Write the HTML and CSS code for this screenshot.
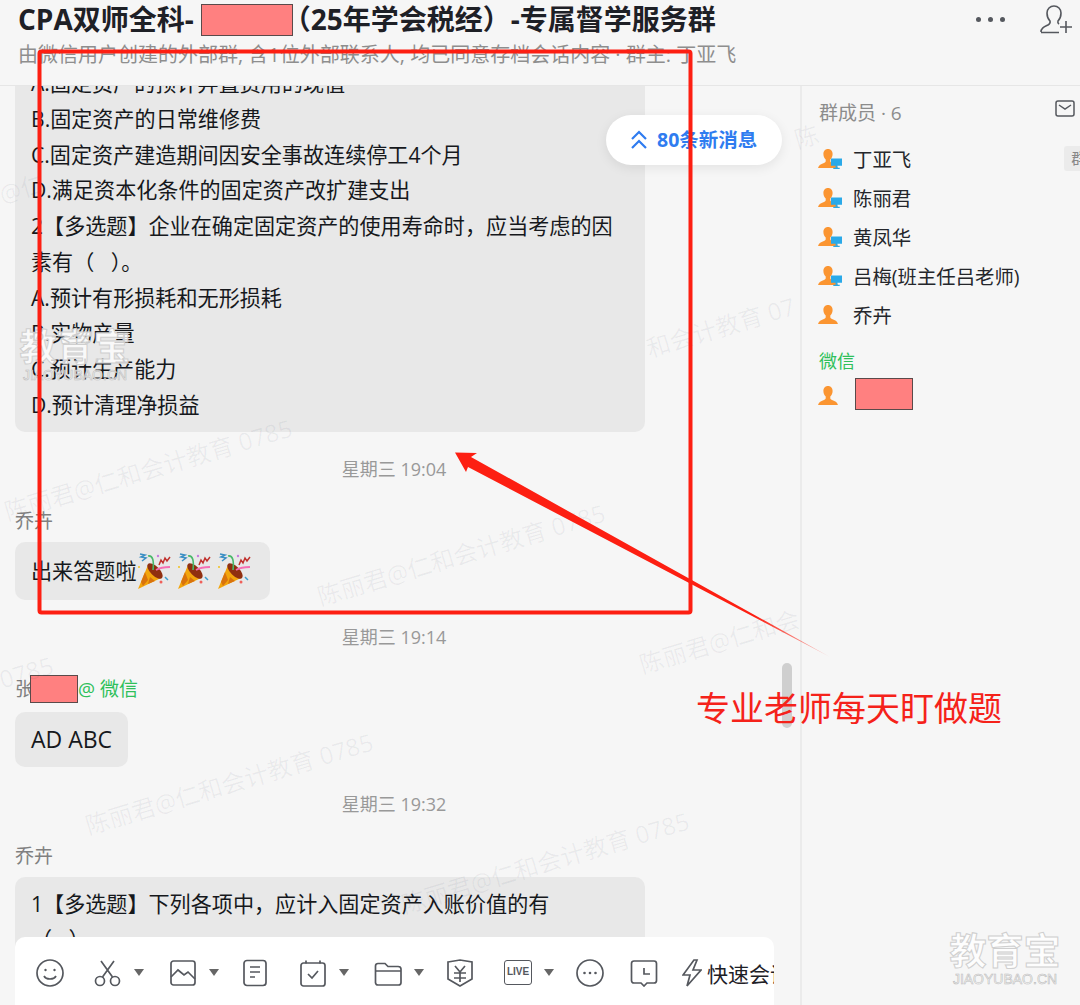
FILE: index.html
```html
<!DOCTYPE html>
<html lang="zh-CN">
<head>
    <meta charset="UTF-8">
    <title>CPA双师全科 专属督学服务群</title>
    <link rel="stylesheet" href="styles.css">
</head>
<body>
    <svg class="sprite" width="0" height="0">
        <symbol id="person" viewBox="0 0 22 22">
            <path fill="#fb9531" d="M11 1c3 0 4.600 2.300 4.600 5 0 2.400-1 4.300-2.300 5.400v1.800c0 .9.700 1.400 2.300 2 2.400.8 4.400 1.600 5.400 4.800H1c1-3.200 3-4 5.400-4.800 1.600-.6 2.300-1.100 2.300-2v-1.800C7.400 10.300 6.400 8.400 6.400 6c0-2.700 1.600-5 4.600-5z"/>
        </symbol>
        <symbol id="monitor" viewBox="0 0 12 12">
            <path fill="#2aa9e8" d="M0 0h12v8H0zM5 8h2v2h2.500v1.500h-7V10H5z"/>
        </symbol>
        <symbol id="popper" viewBox="0 0 36 36">
            <path fill="#f2a50c" d="M1 36l10-24 13 13z"/>
            <path fill="#d9730d" d="M4 29l4-10 3 8-5 6zM13 24l5 4-7 3z"/>
            <ellipse cx="18" cy="18" rx="4.500" ry="10" fill="#8f2f10" transform="rotate(-45 18 18)"/>
            <path fill="none" stroke="#49b86a" stroke-width="1.600" d="M11 3c5-1 6 5 5 14"/>
            <path fill="none" stroke="#3b8fc4" stroke-width="1.500" d="M3 1l5 1-4 2 5 1-4 3"/>
            <path fill="none" stroke="#c0312d" stroke-width="1.500" d="M22 12l2-5 2 3 2-5 2 3 3-4"/>
            <path fill="none" stroke="#f56fb3" stroke-width="1.800" d="M19 17c5-3 9-3 14-3"/>
            <circle cx="2" cy="14" r="1" fill="#f0c020"/>
            <circle cx="21" cy="3" r="1.200" fill="#c77ae0"/>
            <circle cx="24" cy="29" r="1.500" fill="#f0605a"/>
            <path fill="none" stroke="#3b9ed0" stroke-width="1.500" d="M28 24l3 3"/>
        </symbol>
    </svg>

    <header class="top-bar">
        <div class="top-info">
            <h1 class="group-title">CPA双师全科-<span class="redact redact-title"></span>（25年学会税经）-专属督学服务群</h1>
            <p class="group-desc">由微信用户创建的外部群, 含1位外部联系人, 均已同意存档会话内容 · 群主: 丁亚飞</p>
        </div>
        <div class="top-actions">
            <div class="dots"><i></i><i></i><i></i></div>
            <svg class="add-user" width="34" height="30" viewBox="0 0 34 30" fill="none" stroke="#55585e" stroke-width="1.600">
                <path d="M2 28c0-4 3-5 7-7 2-1 2.500-2 2-4-2-2-3-5-3-8 0-4 3-7 7-7s7 3 7 7c0 3-1 6-3 8-.5 1.500 0 2.500 1 3.200M2 28.500h18"/>
                <path d="M27 17v12M21 23h12"/>
            </svg>
        </div>
    </header>

    <main class="content">
        <section class="chat">
            <div class="chat-log">
                <div class="bubble bubble-wide">
                    A.固定资产的预计弃置费用的现值<br>
                    B.固定资产的日常维修费<br>
                    C.固定资产建造期间因安全事故连续停工4个月<br>
                    D.满足资本化条件的固定资产改扩建支出<br>
                    2【多选题】企业在确定固定资产的使用寿命时，应当考虑的因素有（&nbsp;&nbsp;&nbsp;）。<br>
                    A.预计有形损耗和无形损耗<br>
                    B.实物产量<br>
                    C.预计生产能力<br>
                    D.预计清理净损益
                </div>
                <div class="time">星期三 19:04</div>
                <div class="sender">乔卉</div>
                <div class="bubble bubble-emoji">出来答题啦<svg class="popper"><use href="#popper"/></svg><svg class="popper"><use href="#popper"/></svg><svg class="popper"><use href="#popper"/></svg></div>
                <div class="time">星期三 19:14</div>
                <div class="sender">张<span class="redact redact-name"></span><span class="wechat-tag">@ 微信</span></div>
                <div class="bubble bubble-latin">AD ABC</div>
                <div class="time">星期三 19:32</div>
                <div class="sender">乔卉</div>
                <div class="bubble bubble-wide">
                    1【多选题】下列各项中，应计入固定资产入账价值的有<br>
                    （&nbsp;&nbsp;&nbsp;）
                </div>
            </div>

            <div class="new-msg">
                <svg width="18" height="20" viewBox="0 0 18 20" fill="none" stroke="#2f7cf0" stroke-width="2.200">
                    <path d="M2 9l7-7 7 7M2 18l7-7 7 7"/>
                </svg>
                <span>80条新消息</span>
            </div>
            <div class="scroll-thumb"></div>

            <div class="toolbar">
                <div class="tool">
                    <svg class="icon" viewBox="0 0 28 28"><circle cx="14" cy="14" r="13"/><circle cx="9.500" cy="11" r="1.200" class="solid"/><circle cx="18.500" cy="11" r="1.200" class="solid"/><path d="M8 17c2 4 10 4 12 0"/></svg>
                </div>
                <div class="tool has-caret">
                    <svg class="icon" viewBox="0 0 28 28"><circle cx="6" cy="22" r="4.500"/><circle cx="21" cy="22" r="4.500"/><path d="M8.500 18L20 2M18.500 18L7 2"/></svg>
                    <i class="caret"></i>
                </div>
                <div class="tool has-caret">
                    <svg class="icon" viewBox="0 0 28 28"><rect x="2" y="2" width="24" height="24" rx="2.500"/><path d="M2 18l7-7 6 5 4-3 7 7"/></svg>
                    <i class="caret"></i>
                </div>
                <div class="tool">
                    <svg class="icon" viewBox="0 0 28 28"><rect x="3" y="1.500" width="22" height="25" rx="3"/><path d="M9 8h10M9 13h10M9 18h5"/></svg>
                </div>
                <div class="tool has-caret">
                    <svg class="icon" viewBox="0 0 28 28"><rect x="2" y="4" width="24" height="23" rx="2.500"/><path d="M7 1.500v3M21 1.500v3M9 15l4 4 6-7"/></svg>
                    <i class="caret"></i>
                </div>
                <div class="tool has-caret">
                    <svg class="icon" viewBox="0 0 28 28"><path d="M1.500 24V7c0-1.500 1-2.500 2.500-2.500h7l3 3h10c1.500 0 3 1 3 2.500v13.500c0 1.500-1 2.500-2.500 2.500H4c-1.500 0-2.500-1-2.500-2.500zM1.500 12h25"/></svg>
                    <i class="caret"></i>
                </div>
                <div class="tool">
                    <svg class="icon" viewBox="0 0 28 28"><path d="M2 3l12-2 12 2v17l-12 7-12-7zM9 7l5 6 5-6M8 14h12M8 19h12M14 13v10"/></svg>
                </div>
                <div class="tool has-caret">
                    <div class="live-box">LIVE</div>
                    <i class="caret"></i>
                </div>
                <div class="tool">
                    <svg class="icon" viewBox="0 0 28 28"><circle cx="14" cy="14" r="13"/><circle cx="8.500" cy="14" r="1.300" class="solid"/><circle cx="14" cy="14" r="1.300" class="solid"/><circle cx="19.500" cy="14" r="1.300" class="solid"/></svg>
                </div>
                <div class="tool tool-clock">
                    <svg class="icon" viewBox="0 0 28 28"><path d="M4 2h20c1.500 0 2.500 1 2.500 2.500v17c0 1.500-1 2.500-2.500 2.500h-7l-3 3-3-3H4c-1.500 0-2.500-1-2.500-2.500v-17C1.500 3 2.500 2 4 2zM14 9v6h6"/></svg>
                </div>
                <div class="tool tool-meeting">
                    <svg class="icon bolt" viewBox="0 0 20 28"><path d="M12 1L1 16h7l-3 11 14-16h-8l4-10z"/></svg>
                    <span>快速会议</span>
                </div>
            </div>
        </section>

        <aside class="members">
            <div class="members-head">
                <span>群成员 · 6</span>
                <svg width="20" height="17" viewBox="0 0 20 17" fill="none" stroke="#55585e" stroke-width="1.500"><rect x="1" y="1" width="18" height="15" rx="2"/><path d="M4 5l6 4 6-4"/></svg>
            </div>
            <ul class="member-list">
                <li class="member"><span class="avatar"><svg class="av-person"><use href="#person"/></svg><svg class="av-monitor"><use href="#monitor"/></svg></span>丁亚飞<em class="role-tag">群主</em></li>
                <li class="member"><span class="avatar"><svg class="av-person"><use href="#person"/></svg><svg class="av-monitor"><use href="#monitor"/></svg></span>陈丽君</li>
                <li class="member"><span class="avatar"><svg class="av-person"><use href="#person"/></svg><svg class="av-monitor"><use href="#monitor"/></svg></span>黄凤华</li>
                <li class="member"><span class="avatar"><svg class="av-person"><use href="#person"/></svg><svg class="av-monitor"><use href="#monitor"/></svg></span>吕梅(班主任吕老师)</li>
                <li class="member"><span class="avatar"><svg class="av-person"><use href="#person"/></svg></span>乔卉</li>
            </ul>
            <div class="wechat-label">微信</div>
            <div class="member member-wx"><span class="avatar"><svg class="av-person"><use href="#person"/></svg></span><span class="redact redact-member"></span></div>
        </aside>
    </main>

    <!-- watermarks and the red markup sit over the page -->
    <div class="watermarks">
        <span class="wm wm1">陈丽君@仁和会计教育 0785</span>
        <span class="wm wm2">陈丽君@仁和会计教育 0785</span>
        <span class="wm wm3">陈丽君@仁和会计</span>
        <span class="wm wm4">陈丽君@仁和会计教育 0785</span>
        <span class="wm wm5">陈丽君@仁和会计教育 0785</span>
        <span class="wm wm6">和会计教育 07</span>
        <span class="wm wm7">0785</span>
        <span class="wm wm8">陈</span>
        <span class="wm wm9">@仁</span>
    </div>

    <div class="site-logo logo-left">
        <div class="logo-cn">教育宝</div>
        <div class="logo-en">JIAOYUBAO.CN</div>
    </div>
    <div class="site-logo logo-right">
        <div class="logo-cn">教育宝</div>
        <div class="logo-en">JIAOYUBAO.CN</div>
    </div>

    <svg class="markup" width="1080" height="1005" viewBox="0 0 1080 1005">
        <defs>
            <linearGradient id="arrowFade" gradientUnits="userSpaceOnUse" x1="456" y1="452" x2="830" y2="657">
                <stop offset="0.8" stop-color="#fd1f12"/>
                <stop offset="1" stop-color="#fd1f12" stop-opacity="0.2"/>
            </linearGradient>
        </defs>
        <rect x="39.500" y="51.500" width="651" height="561" rx="2" fill="none" stroke="#fd1f12" stroke-width="4"/>
        <path fill="url(#arrowFade)" d="M455 452.500L477 453l-6 4L830 657 468 467l-2 5z"/>
    </svg>
    <div class="markup-note">专业老师每天盯做题</div>
</body>
</html>
```

FILE: styles.css
```css
html, body {
    margin: 0;
    padding: 0;
    height: 1005px;
    overflow: hidden;
}
body {
    position: relative;
    background-color: #f6f6f6;
    color: #1e2026;
    font-family: "Open Sans", "Noto Sans CJK SC", sans-serif;
}
.sprite {
    display: block;
    height: 0;
}

/* top bar */
.top-bar {
    display: flex;
    justify-content: space-between;
    height: 85px;
    padding: 0 7px 0 18px;
    border-bottom: 1px solid #e6e6e6;
    position: relative;
    z-index: 2;
    background-color: #f6f6f6;
}
.group-title {
    margin: 0;
    height: 38px;
    font-size: 28px;
    line-height: 38px;
    font-weight: 700;
    white-space: nowrap;
}
.group-desc {
    margin: 0;
    padding-top: 4px;
    font-size: 20px;
    line-height: 26px;
    color: #8e8e8e;
    white-space: nowrap;
}
.top-actions {
    display: flex;
    align-items: flex-start;
    gap: 34px;
    padding-top: 4px;
}
.dots {
    display: flex;
    gap: 7px;
    padding-top: 13px;
}
.dots i {
    display: block;
    width: 5px;
    height: 5px;
    border-radius: 50%;
    background-color: #55585e;
}
.redact {
    display: inline-block;
    box-sizing: border-box;
    background-color: #ff8080;
    border: 1px solid #5a4a4a;
    vertical-align: top;
}
.redact-title {
    width: 92px;
    height: 32px;
    margin: 4px -10px 0 7px;
}
.redact-name {
    width: 48px;
    height: 28px;
    margin-left: -4px;
}
.redact-member {
    width: 58px;
    height: 32px;
    margin-left: 2px;
}

/* chat column */
.content {
    display: flex;
    height: 919px;
}
.chat {
    position: relative;
    width: 800px;
    overflow: hidden;
}
.chat-log {
    width: 758px;
    margin-top: -30px;
    padding-left: 15px;
}
.bubble {
    display: inline-block;
    box-sizing: border-box;
    padding: 9px 16px;
    border-radius: 10px;
    background-color: #e8e8e8;
    font-size: 21.100px;
    line-height: 35.750px;
    color: #16181c;
}
.bubble-wide {
    display: block;
    width: 630px;
}
.bubble-emoji {
    display: block;
    width: 255px;
    height: 58px;
    padding-top: 11px;
    padding-right: 0;
    white-space: nowrap;
}
.bubble-latin {
    font-size: 23px;
    line-height: 37px;
}
.popper {
    width: 36px;
    height: 36px;
    margin: -4px 3px 0 1px;
    vertical-align: middle;
}
.time {
    margin: 26px 0 28px;
    font-size: 18px;
    line-height: 24px;
    text-align: center;
    color: #999;
}
.sender {
    margin: 0 0 9px;
    font-size: 19px;
    line-height: 24px;
    color: #808080;
}
.bubble + .time {
    margin-top: 25px;
}
.sender .redact {
    margin-top: -2px;
}
.wechat-tag {
    color: #2fc05a;
}
.new-msg {
    position: absolute;
    left: 606px;
    top: 29px;
    display: flex;
    align-items: center;
    gap: 9px;
    box-sizing: border-box;
    width: 176px;
    height: 50px;
    padding-left: 24px;
    border-radius: 25px;
    background-color: #fff;
    box-shadow: 0 3px 12px rgba(0, 0, 0, 0.08);
    color: #2f7cf0;
    font-size: 19.500px;
    font-weight: 700;
    line-height: 46px;
}
.scroll-thumb {
    position: absolute;
    left: 782px;
    top: 577px;
    width: 10px;
    height: 65px;
    border-radius: 5px;
    background-color: #cfcfcf;
}

/* toolbar over the chat */
.toolbar {
    position: absolute;
    left: 15px;
    bottom: 0;
    display: flex;
    align-items: center;
    gap: 22px;
    box-sizing: border-box;
    width: 759px;
    height: 68px;
    padding: 3px 0 0 21px;
    border-radius: 10px 10px 0 0;
    background-color: #fff;
    overflow: hidden;
}
.tool {
    display: flex;
    flex: none;
    align-items: center;
    gap: 12px;
}
.has-caret {
    margin-left: 8px;
}
.has-caret + .has-caret {
    margin-left: 3px;
}
.tool-clock {
    margin-left: 4px;
}
.icon {
    display: block;
    width: 28px;
    height: 28px;
    fill: none;
    stroke: #55585e;
    stroke-width: 1.700;
}
.icon .solid {
    fill: #55585e;
    stroke: none;
}
.bolt {
    width: 20px;
}
.caret {
    display: block;
    width: 0;
    height: 0;
    border-left: 5px solid transparent;
    border-right: 5px solid transparent;
    border-top: 7px solid #666;
}
.live-box {
    box-sizing: border-box;
    width: 28px;
    height: 25px;
    border: 1.700px solid #55585e;
    border-radius: 3px;
    color: #55585e;
    font-family: "Liberation Sans", sans-serif;
    font-size: 10px;
    font-weight: 700;
    line-height: 22px;
    text-align: center;
}
.tool-meeting {
    gap: 5px;
    margin-left: 2px;
    font-size: 21px;
    color: #1e2026;
}

/* member panel */
.members {
    flex: 1;
    border-left: 2px solid #ebebeb;
    padding: 12px 0 0 15px;
    overflow: hidden;
}
.members-head {
    display: flex;
    justify-content: space-between;
    height: 30px;
    padding-left: 2px;
    font-size: 19px;
    line-height: 30px;
    color: #8c8c8c;
}
.members-head svg {
    margin: 2px 5px 0 0;
}
.member-list {
    margin: 0;
    padding: 11px 0 0;
    list-style: none;
}
.member {
    display: flex;
    align-items: center;
    height: 39px;
    font-size: 19.400px;
    color: #24262b;
    white-space: nowrap;
}
.avatar {
    position: relative;
    flex: none;
    width: 36px;
    height: 22px;
}
.av-person {
    display: block;
    width: 22px;
    height: 22px;
}
.av-monitor {
    position: absolute;
    left: 14px;
    top: 10px;
    width: 11px;
    height: 12px;
}
.role-tag {
    flex: none;
    margin-left: 153px;
    padding: 0 7px;
    border-radius: 3px;
    background-color: #ebebeb;
    color: #888;
    font-size: 15px;
    font-style: normal;
    line-height: 25px;
}
.wechat-label {
    margin-top: 14px;
    padding-left: 2px;
    font-size: 18px;
    line-height: 26px;
    color: #2fc05a;
}
.member-wx {
    height: 38px;
    margin-top: 1px;
}
.member-wx .avatar {
    margin-top: 4px;
}

/* overlays */
.watermarks {
    position: absolute;
    left: 0;
    top: 0;
    width: 1080px;
    height: 1005px;
    overflow: hidden;
    pointer-events: none;
}
.wm {
    position: absolute;
    color: rgba(30, 40, 80, 0.06);
    font-size: 24px;
    line-height: 30px;
    white-space: nowrap;
    transform: rotate(-16.500deg);
    transform-origin: left center;
}
.wm1 { left: 5px; top: 497px; }
.wm2 { left: 318px; top: 582px; }
.wm3 { left: 640px; top: 650px; width: 165px; overflow: hidden; }
.wm4 { left: 86px; top: 811px; }
.wm5 { left: 402px; top: 890px; }
.wm6 { left: 647px; top: 334px; }
.wm7 { left: 0; top: 665px; }
.wm8 { left: 795px; top: 125px; }
.wm9 { left: 0; top: 180px; }
.site-logo {
    position: absolute;
    width: 112px;
    text-align: center;
    color: rgba(255, 255, 255, 0.8);
    -webkit-text-stroke: 1px #cfcfcf;
    pointer-events: none;
}
.logo-left {
    left: 19px;
    top: 326px;
}
.logo-right {
    left: 949px;
    top: 930px;
}
.logo-cn {
    font-size: 37px;
    line-height: 42px;
    font-weight: 700;
}
.logo-en {
    font-family: "Liberation Sans", sans-serif;
    font-size: 14px;
    line-height: 14px;
    -webkit-text-stroke: 0.600px #bdbdbd;
}
.markup {
    position: absolute;
    left: 0;
    top: 0;
    z-index: 3;
    pointer-events: none;
}
.markup-note {
    position: absolute;
    left: 696px;
    top: 682px;
    z-index: 3;
    font-family: "Noto Sans CJK SC", sans-serif;
    font-size: 34px;
    line-height: 50px;
    color: #f5221a;
    white-space: nowrap;
}
```
